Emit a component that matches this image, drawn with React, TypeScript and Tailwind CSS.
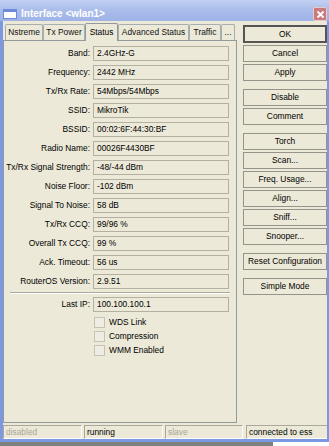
import React from "react";

const fields: [string, string][] = [
  ["Band", "2.4GHz-G"],
  ["Frequency", "2442 MHz"],
  ["Tx/Rx Rate", "54Mbps/54Mbps"],
  ["SSID", "MikroTik"],
  ["BSSID", "00:02:6F:44:30:BF"],
  ["Radio Name", "00026F4430BF"],
  ["Tx/Rx Signal Strength", "-48/-44 dBm"],
  ["Noise Floor", "-102 dBm"],
  ["Signal To Noise", "58 dB"],
  ["Tx/Rx CCQ", "99/96 %"],
  ["Overall Tx CCQ", "99 %"],
  ["Ack. Timeout", "56 us"],
  ["RouterOS Version", "2.9.51"],
];

const tabs: [string, number][] = [
  ["Nstreme", 38],
  ["Tx Power", 42],
  ["Status", 33],
  ["Advanced Status", 71],
  ["Traffic", 32],
  ["...", 14],
];

const buttonGroups: string[][] = [
  ["Cancel", "Apply"],
  ["Disable", "Comment"],
  ["Torch", "Scan...", "Freq. Usage...", "Align...", "Sniff...", "Snooper..."],
  ["Reset Configuration"],
  ["Simple Mode"],
];

function Field({ label, value }: { label: string; value: string }) {
  return (
    <div className="flex items-center h-[15px]">
      <div className="w-[86px] text-right leading-none whitespace-nowrap">{label}:</div>
      <div className="ml-[3px] w-[136px] h-[15px] border border-[#b3b0a2] bg-[#ece9d8] flex items-center pl-[3px] leading-none whitespace-nowrap">
        {value}
      </div>
    </div>
  );
}

function Check({ label }: { label: string }) {
  return (
    <div className="flex items-center h-[12px] pl-[90px]">
      <div className="w-[11px] h-[11px] border border-[#c4c2b5] bg-[#efede3]" />
      <div className="ml-[4px] leading-none">{label}</div>
    </div>
  );
}

function Btn({ label, def }: { label: string; def?: boolean }) {
  return (
    <div
      className={
        def
          ? "h-[18px] w-[84px] border-2 border-[#555555] bg-[#ece9d8] flex items-center justify-center leading-none"
          : "h-[17px] w-[84px] border border-[#95948a] bg-[#ece9d8] flex items-center justify-center leading-none"
      }
    >
      {label}
    </div>
  );
}

export default function App() {
  return (
    <div className="w-[329px] h-[446px] overflow-hidden bg-[#ece9d8] flex flex-col font-['Liberation_Sans',Arial,sans-serif] text-[8.4px] text-black">
      {/* Title bar */}
      <div className="h-[21px] flex items-center bg-gradient-to-b from-[#c2d0f2] via-[#a9bcea] to-[#9fb3e7] relative shrink-0">
        <div className="ml-[3px] mt-[6px] w-[14px] h-[10px] bg-white border border-[#6f8cd8] border-t-[3px]" />
        <div className="ml-[4px] mt-[7px] text-white font-bold text-[10px] leading-none whitespace-nowrap">
          Interface &lt;wlan1&gt;
        </div>
        <div className="absolute right-[2px] top-[7px] w-[14px] h-[14px] rounded-[2px] bg-[#c97b7e] border border-[#e9c9c9] flex items-center justify-center">
          <svg width="9" height="9" viewBox="0 0 9 9">
            <path d="M1.5 1.5 L7.5 7.5 M7.5 1.5 L1.5 7.5" stroke="white" strokeWidth="1.8" />
          </svg>
        </div>
      </div>

      {/* Framed body */}
      <div className="flex-1 flex flex-col border-l-[3px] border-r-[2px] border-[#7c98e2] bg-[#ece9d8]">
        <div className="flex h-[402px]">
          {/* Left: tabs + panel */}
          <div className="w-[234px] flex flex-col pt-[2px]">
            <div className="flex items-end pl-[2px] h-[17px]">
              {tabs.map(([t, w]) =>
                t === "Status" ? (
                  <div
                    key={t}
                    style={{ width: w }}
                    className="h-[18px] -mb-px relative z-10 bg-[#ece9d8] border border-b-0 border-[#919b9c] rounded-t-[2px] flex items-center justify-center leading-none whitespace-nowrap"
                  >
                    {t}
                  </div>
                ) : (
                  <div
                    key={t}
                    style={{ width: w }}
                    className="h-[16px] bg-[#ece9d8] border border-b-0 border-[#a6aeaf] rounded-t-[2px] flex items-center justify-center leading-none whitespace-nowrap overflow-hidden text-[#111]"
                  >
                    {t}
                  </div>
                )
              )}
            </div>
            <div className="flex-1 border border-[#919b9c] bg-[#ece9d8] flex flex-col pt-[5px]">
              <div className="flex flex-col gap-[4px]">
                {fields.map(([l, v]) => (
                  <Field key={l} label={l} value={v} />
                ))}
              </div>
              <div className="mt-[3px] mx-[6px] border-t border-[#aca899] border-b border-b-white" />
              <div className="mt-[3px]">
                <Field label="Last IP" value="100.100.100.1" />
              </div>
              <div className="mt-[4px] flex flex-col gap-[2px]">
                <Check label="WDS Link" />
                <Check label="Compression" />
                <Check label="WMM Enabled" />
              </div>
            </div>
          </div>

          {/* Right: buttons */}
          <div className="ml-[6px] w-[84px] pt-[4px] flex flex-col">
            <Btn label="OK" def />
            {buttonGroups.map((g, gi) => (
              <div key={gi} className={gi === 0 ? "mt-[2px] flex flex-col gap-[2px]" : "mt-[8px] flex flex-col gap-[2px]"}>
                {g.map((b) => (
                  <Btn key={b} label={b} />
                ))}
              </div>
            ))}
          </div>
        </div>

        {/* Status bar */}
        <div className="mt-[2px] flex h-[14px]">
          <div className="w-[79px] h-[14px] border border-[#aca899] border-b-white border-r-white flex items-center pl-[2px] leading-none text-[#a8a69a]">disabled</div>
          <div className="ml-[2px] w-[79px] h-[14px] border border-[#aca899] border-b-white border-r-white flex items-center pl-[2px] leading-none">running</div>
          <div className="ml-[2px] w-[78px] h-[14px] border border-[#aca899] border-b-white border-r-white flex items-center pl-[2px] leading-none text-[#a8a69a]">slave</div>
          <div className="ml-[3px] flex-1 h-[14px] border border-[#aca899] border-b-white border-r-0 flex items-center pl-[2px] leading-none whitespace-nowrap">connected to ess</div>
        </div>
      </div>

      {/* Bottom frame */}
      <div className="h-[3px] bg-[#7c98e2] shrink-0" />
      <div className="h-[4px] flex shrink-0">
        <div className="w-[273px] bg-[#808080]" />
        <div className="flex-1 bg-white" />
      </div>
    </div>
  );
}
